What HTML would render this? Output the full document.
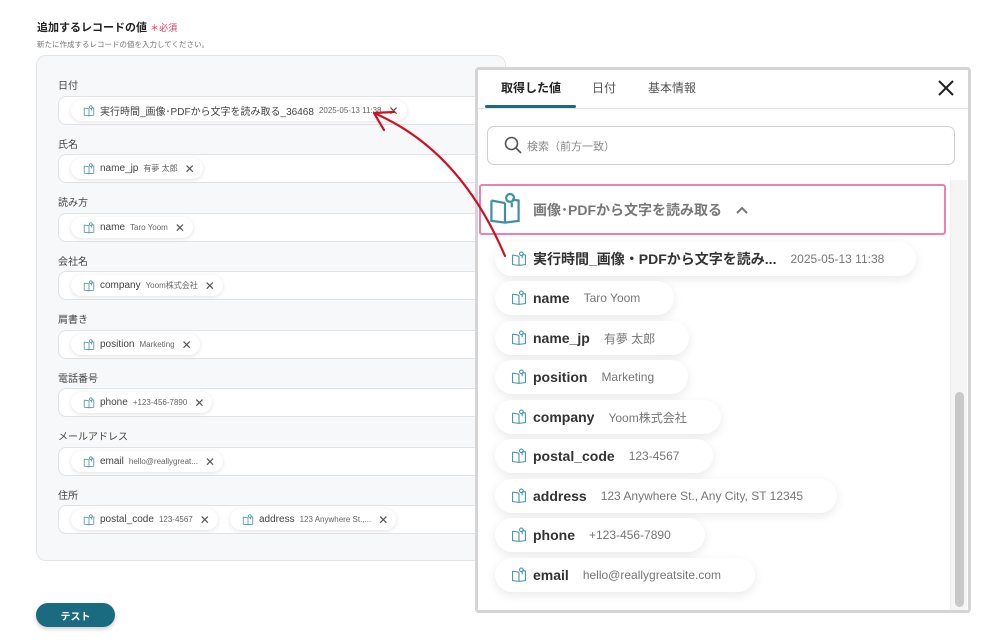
<!DOCTYPE html>
<html><head><meta charset="utf-8">
<style>
*{margin:0;padding:0;box-sizing:border-box}
body{width:1000px;height:643px;background:#fff;font-family:"Liberation Sans","Noto Sans CJK JP",sans-serif;position:relative;overflow:hidden;color:#333}
.a{position:absolute}
.lbl{position:absolute;left:58px;font-size:10px;color:#444}
.inp{position:absolute;left:58px;width:440px;height:29px;background:#fff;border:1px solid #dfe2e6;border-radius:8px}
.chip{position:absolute;top:3px;height:21px;background:#fff;border-radius:11px;box-shadow:0 1px 4px rgba(0,0,0,.12);display:flex;align-items:center;padding:0 8px 0 12px;font-size:10px;white-space:nowrap}
.chip .k{color:#444;margin-left:5px}
.chip .v{color:#666;font-size:8px;margin-left:5px}
.chip .x{margin-left:7px;color:#555;font-size:12px}
.it{position:absolute;left:495px;height:34px;background:#fff;border-radius:17px;box-shadow:0 3px 10px rgba(0,0,0,.09);display:flex;align-items:center;padding:0 34px 0 16px;white-space:nowrap}
.it .k{font-weight:bold;font-size:14px;color:#333;margin-left:6px}
.it .v{font-size:12px;color:#777;margin-left:14px}
</style></head><body>
<svg width="0" height="0" style="position:absolute"><defs>
<symbol id="bk" viewBox="0 0 20 20"><g fill="none" stroke="#3f8fa8" stroke-width="1.3"><path d="M2 5v12l8 1 8-1V5l-4-0.5M10 6.5V18M2 5l8 1.5M14 6.3V9"/><circle cx="13" cy="3.5" r="2.3"/></g></symbol>
</defs></svg>

<div class="a" style="left:37px;top:19px;font-size:11px;font-weight:bold;color:#222">追加するレコードの値 <span style="color:#e0365a;font-weight:normal;font-size:9px">＊必須</span></div>
<div class="a" style="left:37px;top:39px;font-size:7.5px;color:#777">新たに作成するレコードの値を入力してください。</div>
<div class="a" style="left:36px;top:55px;width:470px;height:506px;background:#f7f8f9;border:1px solid #e3e5e8;border-radius:10px"></div>

<div class="lbl" style="top:77px">日付</div>
<div class="inp" style="top:96px"><div class="chip" style="left:12px"><svg width="12" height="12"><use href="#bk"/></svg><span class="k" style="font-size:10px">実行時間_画像･PDFから文字を読み取る_36468</span><span class="v">2025-05-13 11:38</span><span class="x">✕</span></div></div>
<div class="lbl" style="top:136px">氏名</div>
<div class="inp" style="top:154px"><div class="chip" style="left:12px"><svg width="12" height="12"><use href="#bk"/></svg><span class="k">name_jp</span><span class="v">有夢 太郎</span><span class="x">✕</span></div></div>
<div class="lbl" style="top:194px">読み方</div>
<div class="inp" style="top:213px"><div class="chip" style="left:12px"><svg width="12" height="12"><use href="#bk"/></svg><span class="k">name</span><span class="v">Taro Yoom</span><span class="x">✕</span></div></div>
<div class="lbl" style="top:253px">会社名</div>
<div class="inp" style="top:271px"><div class="chip" style="left:12px"><svg width="12" height="12"><use href="#bk"/></svg><span class="k">company</span><span class="v">Yoom株式会社</span><span class="x">✕</span></div></div>
<div class="lbl" style="top:311px">肩書き</div>
<div class="inp" style="top:330px"><div class="chip" style="left:12px"><svg width="12" height="12"><use href="#bk"/></svg><span class="k">position</span><span class="v">Marketing</span><span class="x">✕</span></div></div>
<div class="lbl" style="top:370px">電話番号</div>
<div class="inp" style="top:388px"><div class="chip" style="left:12px"><svg width="12" height="12"><use href="#bk"/></svg><span class="k">phone</span><span class="v">+123-456-7890</span><span class="x">✕</span></div></div>
<div class="lbl" style="top:428px">メールアドレス</div>
<div class="inp" style="top:447px"><div class="chip" style="left:12px"><svg width="12" height="12"><use href="#bk"/></svg><span class="k">email</span><span class="v">hello@reallygreat...</span><span class="x">✕</span></div></div>
<div class="lbl" style="top:487px">住所</div>
<div class="inp" style="top:505px"><div class="chip" style="left:12px"><svg width="12" height="12"><use href="#bk"/></svg><span class="k">postal_code</span><span class="v">123-4567</span><span class="x">✕</span></div><div class="chip" style="left:171px"><svg width="12" height="12"><use href="#bk"/></svg><span class="k">address</span><span class="v">123 Anywhere St.,...</span><span class="x">✕</span></div></div>

<div class="a" style="left:36px;top:603px;width:79px;height:24px;border-radius:12px;background:#1a6a80;color:#fff;font-size:10px;font-weight:bold;display:flex;align-items:center;justify-content:center;box-shadow:0 2px 4px rgba(0,0,0,.2)">テスト</div>

<!-- panel -->
<div class="a" style="left:475px;top:67px;width:496px;height:546px;background:#fff;border:3px solid #d4d4d4;border-radius:4px"></div>
<div class="a" style="left:501px;top:79px;font-size:12px;font-weight:bold;color:#222">取得した値</div>
<div class="a" style="left:592px;top:79px;font-size:12px;color:#555">日付</div>
<div class="a" style="left:648px;top:79px;font-size:12px;color:#555">基本情報</div>
<div class="a" style="left:485px;top:105px;width:91px;height:3px;background:#1a6a80;border-radius:2px"></div>
<div class="a" style="left:478px;top:108px;width:490px;height:1px;background:#e5e5e5"></div>
<svg class="a" style="left:937px;top:79px" width="18" height="18"><path d="M2 2L16 16M16 2L2 16" stroke="#222" stroke-width="2"/></svg>
<div class="a" style="left:487px;top:126px;width:468px;height:39px;border:1px solid #cfcfcf;border-radius:7px"></div>
<svg class="a" style="left:504px;top:136px" width="18" height="18"><circle cx="7.5" cy="7.5" r="6" fill="none" stroke="#555" stroke-width="1.6"/><path d="M12 12l5 5" stroke="#555" stroke-width="1.6"/></svg>
<div class="a" style="left:527px;top:138px;font-size:11px;color:#888">検索（前方一致）</div>
<div class="a" style="left:950px;top:180px;width:17px;height:430px;background:#f5f5f5;border-left:1px solid #ececec"></div>
<div class="a" style="left:955px;top:392px;width:9px;height:215px;background:#c8c8c8;border-radius:5px"></div>
<div class="a" style="left:479px;top:184px;width:467px;height:51px;border:2px solid #ee7fb0;border-radius:3px;background:#fff"></div>
<svg class="a" style="left:488px;top:192px" width="34" height="34" viewBox="0 0 20 20"><use href="#bk"/></svg>
<div class="a" style="left:533px;top:200px;font-size:14px;font-weight:bold;color:#777">画像･PDFから文字を読み取る</div>
<svg class="a" style="left:735px;top:205px" width="14" height="10"><path d="M2 8L7 3L12 8" fill="none" stroke="#777" stroke-width="2"/></svg>

<div class="it" style="top:242px;width:421px;padding-right:12px"><svg width="16" height="16"><use href="#bk"/></svg><span class="k">実行時間_画像・PDFから文字を読み...</span><span class="v">2025-05-13 11:38</span></div>
<div class="it" style="top:281px"><svg width="16" height="16"><use href="#bk"/></svg><span class="k">name</span><span class="v">Taro Yoom</span></div>
<div class="it" style="top:321px"><svg width="16" height="16"><use href="#bk"/></svg><span class="k">name_jp</span><span class="v">有夢 太郎</span></div>
<div class="it" style="top:360px"><svg width="16" height="16"><use href="#bk"/></svg><span class="k">position</span><span class="v">Marketing</span></div>
<div class="it" style="top:400px"><svg width="16" height="16"><use href="#bk"/></svg><span class="k">company</span><span class="v">Yoom株式会社</span></div>
<div class="it" style="top:439px"><svg width="16" height="16"><use href="#bk"/></svg><span class="k">postal_code</span><span class="v">123-4567</span></div>
<div class="it" style="top:479px"><svg width="16" height="16"><use href="#bk"/></svg><span class="k">address</span><span class="v">123 Anywhere St., Any City, ST 12345</span></div>
<div class="it" style="top:518px"><svg width="16" height="16"><use href="#bk"/></svg><span class="k">phone</span><span class="v">+123-456-7890</span></div>
<div class="it" style="top:558px"><svg width="16" height="16"><use href="#bk"/></svg><span class="k">email</span><span class="v">hello@reallygreatsite.com</span></div>

<svg class="a" style="left:0;top:0" width="1000" height="643"><g fill="none" stroke="#cc1122" stroke-width="2.2" stroke-linecap="round"><path d="M505 256Q460 150 374 113"/><path d="M374 113L394 112M374 113L384 130"/></g></svg>
</body></html>
